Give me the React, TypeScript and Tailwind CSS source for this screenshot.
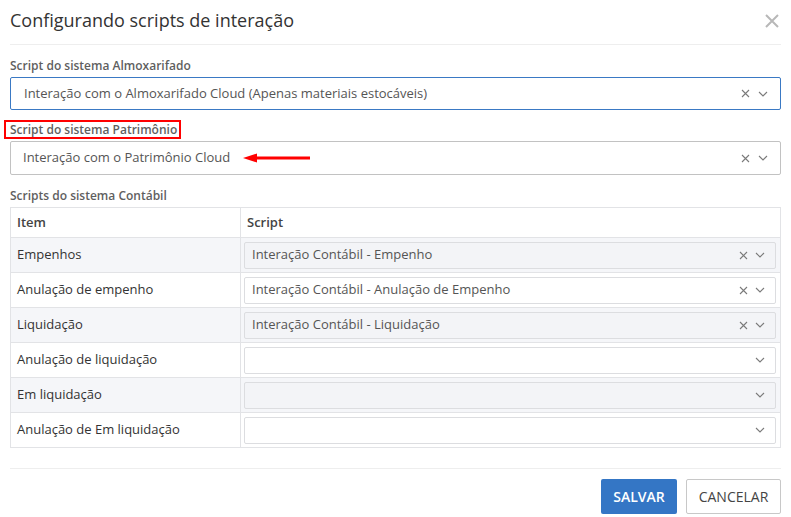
import React from "react";

const rows = [
  { name: "Empenhos", value: "Interação Contábil - Empenho", striped: true },
  { name: "Anulação de empenho", value: "Interação Contábil - Anulação de Empenho", striped: false },
  { name: "Liquidação", value: "Interação Contábil - Liquidação", striped: true },
  { name: "Anulação de liquidação", value: "", striped: false },
  { name: "Em liquidação", value: "", striped: true },
  { name: "Anulação de Em liquidação", value: "", striped: false },
];

function Clear() {
  return (
    <svg width="9" height="9" viewBox="0 0 9 9" className="shrink-0">
      <path d="M1 1 L8 8 M8 1 L1 8" stroke="#7a7a7a" strokeWidth="1.1" fill="none" />
    </svg>
  );
}

function Chevron() {
  return (
    <svg width="10" height="6" viewBox="0 0 10 6" className="shrink-0">
      <path d="M1 1 L5 5 L9 1" stroke="#7a7a7a" strokeWidth="1.1" fill="none" />
    </svg>
  );
}

function CellSelect({ value, striped }: { value: string; striped: boolean }) {
  return (
    <div
      className={`h-[27px] flex items-center pl-[7px] pr-[10px] border border-[#dcdde0] rounded-[2px] ${
        striped ? "bg-[#f3f4f7]" : "bg-white"
      }`}
    >
      <span className="flex-1 text-[13px] text-[#555] truncate">{value}</span>
      {value && <Clear />}
      <span className="ml-[7px] flex">
        <Chevron />
      </span>
    </div>
  );
}

export default function App() {
  return (
    <div
      className="w-[791px] h-[517px] bg-white relative text-[#333]"
      style={{ fontFamily: "'Open Sans', sans-serif" }}
    >
      <div className="mx-[10px] h-[45px] pt-[8px] flex justify-between border-b border-[#eeeeee]">
        <h1 className="text-[18px] leading-[24px] text-[#333]">Configurando scripts de interação</h1>
        <svg width="14" height="14" viewBox="0 0 14 14" className="mt-[6px] mr-[2px]">
          <path d="M1 1 L13 13 M13 1 L1 13" stroke="#b8b8b8" strokeWidth="2" fill="none" />
        </svg>
      </div>

      <div className="px-[10px]">
        <div className="mt-[13px] mb-[3px] text-[12px] leading-[16px] font-semibold text-[#5f5f5f]">
          Script do sistema Almoxarifado
        </div>
        <div className="h-[33px] flex items-center pl-[13px] pr-[12px] border border-[#3a79c4] rounded-[2px]">
          <span className="flex-1 text-[13px] text-[#555]">
            Interação com o Almoxarifado Cloud (Apenas materiais estocáveis)
          </span>
          <Clear />
          <span className="ml-[8px] flex">
            <Chevron />
          </span>
        </div>

        <div className="relative mt-[12px] mb-[3px] text-[12px] leading-[16px] font-semibold text-[#5f5f5f]">
          Script do sistema Patrimônio
          <div className="absolute left-[-6px] top-[-2px] w-[177px] h-[19px] border-2 border-[#ff0000]" />
        </div>
        <div className="relative h-[34px] flex items-center pl-[12px] pr-[12px] border border-[#c2c2c2] rounded-[2px]">
          <span className="flex-1 text-[13px] text-[#555]">Interação com o Patrimônio Cloud</span>
          <Clear />
          <span className="ml-[8px] flex">
            <Chevron />
          </span>
          <svg
            width="70"
            height="10"
            viewBox="0 0 70 10"
            className="absolute left-[231px] top-[11px]"
          >
            <path d="M14 5 L68 5" stroke="#ff0000" strokeWidth="3" />
            <path d="M1 5 L15 0.5 L15 9.5 Z" fill="#ff0000" />
          </svg>
        </div>

        <div className="mt-[13px] mb-[3px] text-[12px] leading-[16px] font-semibold text-[#5f5f5f]">
          Scripts do sistema Contábil
        </div>
        <div className="border border-[#e2e3e6]">
          <div className="flex h-[29px] items-center">
            <div className="w-[230px] h-full flex items-center pl-[6px] border-r border-[#e2e3e6] text-[13px] font-semibold text-[#444]">
              Item
            </div>
            <div className="flex-1 pl-[6px] text-[13px] font-semibold text-[#444]">Script</div>
          </div>
          {rows.map((r) => (
            <div
              key={r.name}
              className={`flex h-[35px] border-t border-[#e2e3e6] ${r.striped ? "bg-[#f5f6f9]" : "bg-white"}`}
            >
              <div className="w-[230px] flex items-center pl-[6px] border-r border-[#e2e3e6] text-[13px] text-[#333]">
                {r.name}
              </div>
              <div className="flex-1 flex flex-col justify-center pl-[3px] pr-[4px]">
                <CellSelect value={r.value} striped={r.striped} />
              </div>
            </div>
          ))}
        </div>

        <div className="mt-[20px] border-t border-[#eeeeee]" />
        <div className="mt-[10px] flex justify-end gap-[9px]">
          <button className="h-[35px] w-[76px] bg-[#3476c5] text-white text-[14px] font-semibold rounded-[2px]">
            SALVAR
          </button>
          <button className="h-[35px] w-[95px] bg-white border border-[#c8c8c8] text-[#444] text-[14px] rounded-[2px]">
            CANCELAR
          </button>
        </div>
      </div>
    </div>
  );
}
